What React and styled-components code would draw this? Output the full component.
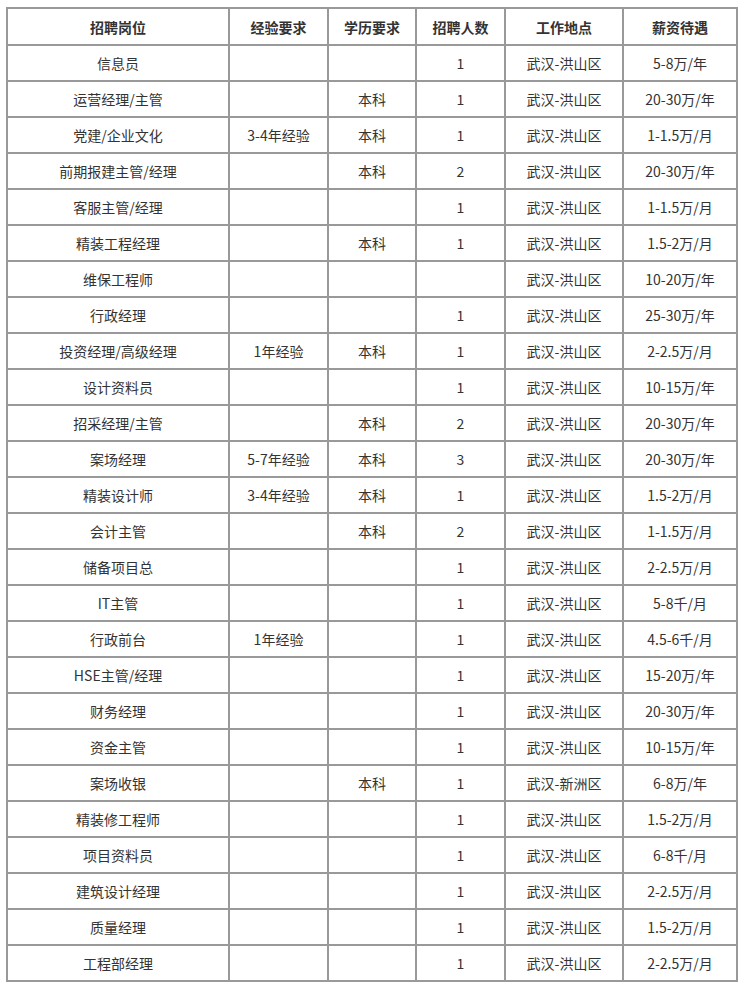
import styled, { createGlobalStyle } from "styled-components";

const GlobalStyle = createGlobalStyle`
  html, body {
    margin: 0;
    padding: 0;
    background: #fff;
  }
  body {
    font-family: "Microsoft YaHei", "Noto Sans CJK SC", "Noto Sans", sans-serif;
  }
`;

const columns = [
  { title: "招聘岗位", width: 222 },
  { title: "经验要求", width: 99 },
  { title: "学历要求", width: 88 },
  { title: "招聘人数", width: 89 },
  { title: "工作地点", width: 118 },
  { title: "薪资待遇", width: 114 },
];

const jobs = [
  ["信息员", "", "", "1", "武汉-洪山区", "5-8万/年"],
  ["运营经理/主管", "", "本科", "1", "武汉-洪山区", "20-30万/年"],
  ["党建/企业文化", "3-4年经验", "本科", "1", "武汉-洪山区", "1-1.5万/月"],
  ["前期报建主管/经理", "", "本科", "2", "武汉-洪山区", "20-30万/年"],
  ["客服主管/经理", "", "", "1", "武汉-洪山区", "1-1.5万/月"],
  ["精装工程经理", "", "本科", "1", "武汉-洪山区", "1.5-2万/月"],
  ["维保工程师", "", "", "", "武汉-洪山区", "10-20万/年"],
  ["行政经理", "", "", "1", "武汉-洪山区", "25-30万/年"],
  ["投资经理/高级经理", "1年经验", "本科", "1", "武汉-洪山区", "2-2.5万/月"],
  ["设计资料员", "", "", "1", "武汉-洪山区", "10-15万/年"],
  ["招采经理/主管", "", "本科", "2", "武汉-洪山区", "20-30万/年"],
  ["案场经理", "5-7年经验", "本科", "3", "武汉-洪山区", "20-30万/年"],
  ["精装设计师", "3-4年经验", "本科", "1", "武汉-洪山区", "1.5-2万/月"],
  ["会计主管", "", "本科", "2", "武汉-洪山区", "1-1.5万/月"],
  ["储备项目总", "", "", "1", "武汉-洪山区", "2-2.5万/月"],
  ["IT主管", "", "", "1", "武汉-洪山区", "5-8千/月"],
  ["行政前台", "1年经验", "", "1", "武汉-洪山区", "4.5-6千/月"],
  ["HSE主管/经理", "", "", "1", "武汉-洪山区", "15-20万/年"],
  ["财务经理", "", "", "1", "武汉-洪山区", "20-30万/年"],
  ["资金主管", "", "", "1", "武汉-洪山区", "10-15万/年"],
  ["案场收银", "", "本科", "1", "武汉-新洲区", "6-8万/年"],
  ["精装修工程师", "", "", "1", "武汉-洪山区", "1.5-2万/月"],
  ["项目资料员", "", "", "1", "武汉-洪山区", "6-8千/月"],
  ["建筑设计经理", "", "", "1", "武汉-洪山区", "2-2.5万/月"],
  ["质量经理", "", "", "1", "武汉-洪山区", "1.5-2万/月"],
  ["工程部经理", "", "", "1", "武汉-洪山区", "2-2.5万/月"],
];

const Page = styled.div`
  padding: 7px 0 0 6px;
`;

const Table = styled.table`
  border-collapse: collapse;
  table-layout: fixed;
  width: 730px;
  color: #333;
  font-size: 14px;
`;

const HeadCell = styled.th`
  border: 2px solid #999;
  height: 35px;
  padding: 0;
  text-align: center;
  font-weight: bold;
  color: #333;
`;

const Cell = styled.td`
  border: 2px solid #999;
  height: 34px;
  padding: 0;
  text-align: center;
  vertical-align: middle;
  line-height: 20px;
`;

export default function App() {
  return (
    <>
      <GlobalStyle />
      <Page>
        <Table>
          <colgroup>
            {columns.map((c) => (
              <col key={c.title} style={{ width: c.width }} />
            ))}
          </colgroup>
          <thead>
            <tr>
              {columns.map((c) => (
                <HeadCell key={c.title}>{c.title}</HeadCell>
              ))}
            </tr>
          </thead>
          <tbody>
            {jobs.map((row, i) => (
              <tr key={i}>
                {row.map((v, j) => (
                  <Cell key={j}>{v}</Cell>
                ))}
              </tr>
            ))}
          </tbody>
        </Table>
      </Page>
    </>
  );
}
